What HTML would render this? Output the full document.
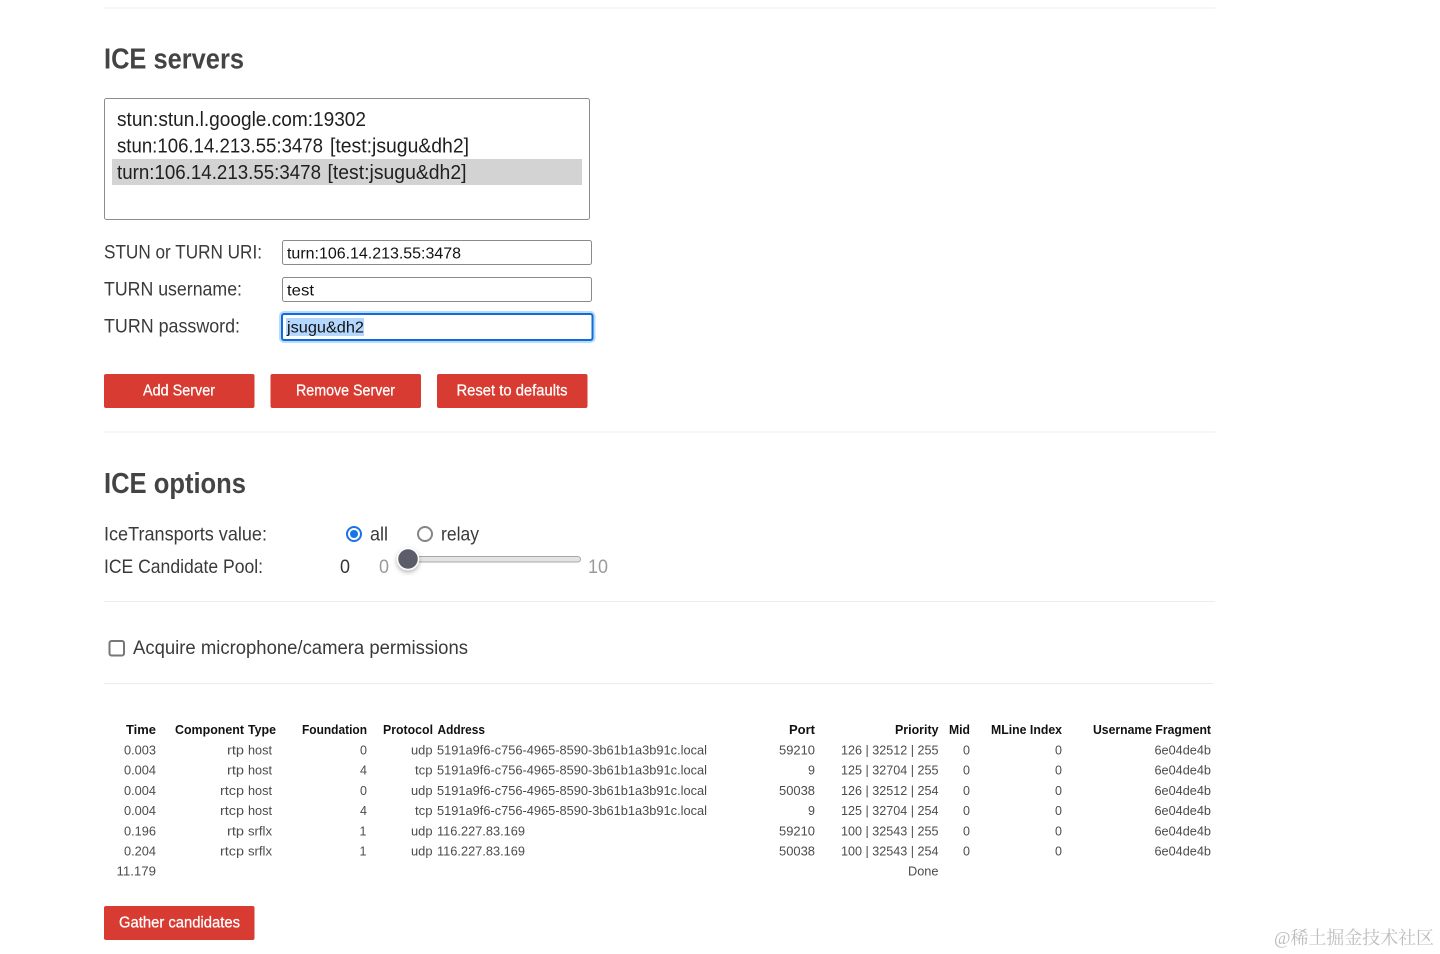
<!DOCTYPE html>
<html lang="zh">
<head>
<meta charset="utf-8">
<title>ICE servers</title>
<style>
html,body{margin:0;padding:0;background:#fff;width:1440px;height:954px;overflow:hidden}
svg{display:block;position:absolute;left:0;top:0}
text{font-family:"Liberation Sans",Arial,sans-serif}
.h{font-size:28.5px;font-weight:700;fill:#444}
.l{font-size:20px;fill:#1f1f1f}
.f{font-size:19.5px;fill:#3a3a3a}
.i{font-size:16px;fill:#111}
.b{font-size:15.5px;fill:#fff;stroke:#fff;stroke-width:.25px}
.th{font-size:12.5px;font-weight:700;fill:#111}
.td{font-size:12.5px;fill:#4c4c4c}
.r{text-anchor:end}
</style>
</head>
<body>
<svg width="1440" height="954" viewBox="0 0 1440 954" xmlns="http://www.w3.org/2000/svg">
<defs>
<filter id="sh" x="-60%" y="-60%" width="220%" height="220%"><feDropShadow dx="0" dy="2" stdDeviation="2.500" flood-color="#000" flood-opacity=".3"/></filter>
</defs>
<rect width="1440" height="954" fill="#fff"/>

<g fill="#ececec">
<rect x="104" y="7.5" width="1111" height="1"/>
<rect x="104" y="431.5" width="1111" height="1"/>
<rect x="104" y="601" width="1111" height="1"/>
<rect x="104" y="683" width="1109" height="1"/>
</g>

<text class="h" x="104" y="68.500" textLength="140" lengthAdjust="spacingAndGlyphs">ICE servers</text>

<rect x="104.5" y="98.5" width="485" height="121" rx="2" fill="#fff" stroke="#8c8c8c"/>
<rect x="112" y="159" width="470" height="26" fill="#d3d3d3"/>
<text class="l" x="117" y="126" textLength="249" lengthAdjust="spacingAndGlyphs">stun:stun.l.google.com:19302</text>
<text class="l" x="117" y="152.500" textLength="206" lengthAdjust="spacingAndGlyphs">stun:106.14.213.55:3478</text>
<text class="l" x="330" y="152.500" textLength="139" lengthAdjust="spacingAndGlyphs">[test:jsugu&amp;dh2]</text>
<text class="l" x="117" y="179" textLength="204" lengthAdjust="spacingAndGlyphs">turn:106.14.213.55:3478</text>
<text class="l" x="327.500" y="179" textLength="139" lengthAdjust="spacingAndGlyphs">[test:jsugu&amp;dh2]</text>

<text class="f" x="104" y="258.500" textLength="158" lengthAdjust="spacingAndGlyphs">STUN or TURN URI:</text>
<text class="f" x="104" y="295.500" textLength="138" lengthAdjust="spacingAndGlyphs">TURN username:</text>
<text class="f" x="104" y="332.500" textLength="136" lengthAdjust="spacingAndGlyphs">TURN password:</text>

<rect x="282.500" y="240.500" width="309" height="24" rx="2" fill="#fff" stroke="#8a8a8a"/>
<text class="i" x="287" y="258.500" textLength="174" lengthAdjust="spacingAndGlyphs">turn:106.14.213.55:3478</text>
<rect x="282.500" y="277.500" width="309" height="24" rx="2" fill="#fff" stroke="#8a8a8a"/>
<text class="i" x="287" y="295.500" textLength="27" lengthAdjust="spacingAndGlyphs">test</text>
<rect x="279" y="311" width="316.500" height="32" rx="5" fill="#b8dcfc"/>
<rect x="282" y="314" width="310.500" height="26" rx="2" fill="#fff" stroke="#0f6cd8" stroke-width="2"/>
<rect x="286" y="318" width="78" height="18" fill="#b3d7fe"/>
<text class="i" x="287" y="332.500" textLength="77" lengthAdjust="spacingAndGlyphs">jsugu&amp;dh2</text>

<g fill="#d83b31">
<rect x="104" y="374" width="150.500" height="34" rx="2"/>
<rect x="270.500" y="374" width="150.500" height="34" rx="2"/>
<rect x="437" y="374" width="150.500" height="34" rx="2"/>
<rect x="104" y="906" width="150.500" height="34" rx="2"/>
</g>
<text class="b" x="143" y="395.500" textLength="72" lengthAdjust="spacingAndGlyphs">Add Server</text>
<text class="b" x="296" y="395.500" textLength="99" lengthAdjust="spacingAndGlyphs">Remove Server</text>
<text class="b" x="456.500" y="395.500" textLength="111" lengthAdjust="spacingAndGlyphs">Reset to defaults</text>
<text class="b" x="119" y="927.500" textLength="121" lengthAdjust="spacingAndGlyphs">Gather candidates</text>

<text class="h" x="104" y="493" textLength="142" lengthAdjust="spacingAndGlyphs">ICE options</text>

<text class="f" x="104" y="540.500" textLength="163" lengthAdjust="spacingAndGlyphs">IceTransports value:</text>
<circle cx="354" cy="534" r="7" fill="#fff" stroke="#1a73e8" stroke-width="2"/>
<circle cx="354" cy="534" r="4" fill="#1a73e8"/>
<text class="f" x="370" y="540.500" textLength="18" lengthAdjust="spacingAndGlyphs">all</text>
<circle cx="425" cy="534" r="7" fill="#fff" stroke="#858585" stroke-width="2"/>
<text class="f" x="441" y="540.500" textLength="38" lengthAdjust="spacingAndGlyphs">relay</text>

<text class="f" x="104" y="573" textLength="159" lengthAdjust="spacingAndGlyphs">ICE Candidate Pool:</text>
<text class="f" x="340" y="573" textLength="10" lengthAdjust="spacingAndGlyphs" style="fill:#333">0</text>
<text class="f" x="379" y="573" textLength="10" lengthAdjust="spacingAndGlyphs" style="fill:#9a9a9a">0</text>
<rect x="405.500" y="556.500" width="175" height="5.500" rx="2.750" fill="#e4e4e4" stroke="#a8a8a8"/>
<circle cx="408" cy="559" r="10.500" fill="#5b5c6b" stroke="#fff" stroke-width="1.500" filter="url(#sh)"/>
<text class="f" x="588" y="573" textLength="20" lengthAdjust="spacingAndGlyphs" style="fill:#9a9a9a">10</text>

<rect x="109.500" y="641" width="14.500" height="14.500" rx="2" fill="#fff" stroke="#777" stroke-width="2"/>
<text class="f" x="133" y="654" textLength="335" lengthAdjust="spacingAndGlyphs">Acquire microphone/camera permissions</text>

<!-- header -->
<text class="th" x="126" y="734" textLength="30" lengthAdjust="spacingAndGlyphs">Time</text>
<text class="th" x="175" y="734" textLength="69" lengthAdjust="spacingAndGlyphs">Component</text>
<text class="th" x="248" y="734" textLength="28" lengthAdjust="spacingAndGlyphs">Type</text>
<text class="th" x="302" y="734" textLength="65" lengthAdjust="spacingAndGlyphs">Foundation</text>
<text class="th" x="383" y="734" textLength="50" lengthAdjust="spacingAndGlyphs">Protocol</text>
<text class="th" x="437.500" y="734" textLength="47.500" lengthAdjust="spacingAndGlyphs">Address</text>
<text class="th" x="789" y="734" textLength="26" lengthAdjust="spacingAndGlyphs">Port</text>
<text class="th" x="895" y="734" textLength="43.500" lengthAdjust="spacingAndGlyphs">Priority</text>
<text class="th" x="949" y="734" textLength="21" lengthAdjust="spacingAndGlyphs">Mid</text>
<text class="th" x="991" y="734" textLength="71" lengthAdjust="spacingAndGlyphs">MLine Index</text>
<text class="th" x="1093" y="734" textLength="118" lengthAdjust="spacingAndGlyphs">Username Fragment</text>

<!-- row 1 -->
<g transform="translate(0,754.5)">
<text class="td" x="124" textLength="32" lengthAdjust="spacingAndGlyphs">0.003</text>
<text class="td" x="227" textLength="17" lengthAdjust="spacingAndGlyphs">rtp</text>
<text class="td" x="248" textLength="24" lengthAdjust="spacingAndGlyphs">host</text>
<text class="td r" x="367">0</text>
<text class="td" x="411" textLength="21.500" lengthAdjust="spacingAndGlyphs">udp</text>
<text class="td" x="437" textLength="270" lengthAdjust="spacingAndGlyphs">5191a9f6-c756-4965-8590-3b61b1a3b91c.local</text>
<text class="td" x="779" textLength="36" lengthAdjust="spacingAndGlyphs">59210</text>
<text class="td" x="841" textLength="97.500" lengthAdjust="spacingAndGlyphs">126 | 32512 | 255</text>
<text class="td r" x="970">0</text>
<text class="td r" x="1062">0</text>
<text class="td" x="1154.500" textLength="56.500" lengthAdjust="spacingAndGlyphs">6e04de4b</text>
</g>
<!-- row 2 -->
<g transform="translate(0,774.5)">
<text class="td" x="124" textLength="32" lengthAdjust="spacingAndGlyphs">0.004</text>
<text class="td" x="227" textLength="17" lengthAdjust="spacingAndGlyphs">rtp</text>
<text class="td" x="248" textLength="24" lengthAdjust="spacingAndGlyphs">host</text>
<text class="td r" x="367">4</text>
<text class="td" x="415" textLength="17.500" lengthAdjust="spacingAndGlyphs">tcp</text>
<text class="td" x="437" textLength="270" lengthAdjust="spacingAndGlyphs">5191a9f6-c756-4965-8590-3b61b1a3b91c.local</text>
<text class="td r" x="815">9</text>
<text class="td" x="841" textLength="97.500" lengthAdjust="spacingAndGlyphs">125 | 32704 | 255</text>
<text class="td r" x="970">0</text>
<text class="td r" x="1062">0</text>
<text class="td" x="1154.500" textLength="56.500" lengthAdjust="spacingAndGlyphs">6e04de4b</text>
</g>
<!-- row 3 -->
<g transform="translate(0,794.8)">
<text class="td" x="124" textLength="32" lengthAdjust="spacingAndGlyphs">0.004</text>
<text class="td" x="220" textLength="24" lengthAdjust="spacingAndGlyphs">rtcp</text>
<text class="td" x="248" textLength="24" lengthAdjust="spacingAndGlyphs">host</text>
<text class="td r" x="367">0</text>
<text class="td" x="411" textLength="21.500" lengthAdjust="spacingAndGlyphs">udp</text>
<text class="td" x="437" textLength="270" lengthAdjust="spacingAndGlyphs">5191a9f6-c756-4965-8590-3b61b1a3b91c.local</text>
<text class="td" x="779" textLength="36" lengthAdjust="spacingAndGlyphs">50038</text>
<text class="td" x="841" textLength="97.500" lengthAdjust="spacingAndGlyphs">126 | 32512 | 254</text>
<text class="td r" x="970">0</text>
<text class="td r" x="1062">0</text>
<text class="td" x="1154.500" textLength="56.500" lengthAdjust="spacingAndGlyphs">6e04de4b</text>
</g>
<!-- row 4 -->
<g transform="translate(0,815.2)">
<text class="td" x="124" textLength="32" lengthAdjust="spacingAndGlyphs">0.004</text>
<text class="td" x="220" textLength="24" lengthAdjust="spacingAndGlyphs">rtcp</text>
<text class="td" x="248" textLength="24" lengthAdjust="spacingAndGlyphs">host</text>
<text class="td r" x="367">4</text>
<text class="td" x="415" textLength="17.500" lengthAdjust="spacingAndGlyphs">tcp</text>
<text class="td" x="437" textLength="270" lengthAdjust="spacingAndGlyphs">5191a9f6-c756-4965-8590-3b61b1a3b91c.local</text>
<text class="td r" x="815">9</text>
<text class="td" x="841" textLength="97.500" lengthAdjust="spacingAndGlyphs">125 | 32704 | 254</text>
<text class="td r" x="970">0</text>
<text class="td r" x="1062">0</text>
<text class="td" x="1154.500" textLength="56.500" lengthAdjust="spacingAndGlyphs">6e04de4b</text>
</g>
<!-- row 5 -->
<g transform="translate(0,835.4)">
<text class="td" x="124" textLength="32" lengthAdjust="spacingAndGlyphs">0.196</text>
<text class="td" x="227" textLength="17" lengthAdjust="spacingAndGlyphs">rtp</text>
<text class="td" x="248" textLength="24" lengthAdjust="spacingAndGlyphs">srflx</text>
<text class="td r" x="366.500">1</text>
<text class="td" x="411" textLength="21.500" lengthAdjust="spacingAndGlyphs">udp</text>
<text class="td" x="437" textLength="88" lengthAdjust="spacingAndGlyphs">116.227.83.169</text>
<text class="td" x="779" textLength="36" lengthAdjust="spacingAndGlyphs">59210</text>
<text class="td" x="841" textLength="97.500" lengthAdjust="spacingAndGlyphs">100 | 32543 | 255</text>
<text class="td r" x="970">0</text>
<text class="td r" x="1062">0</text>
<text class="td" x="1154.500" textLength="56.500" lengthAdjust="spacingAndGlyphs">6e04de4b</text>
</g>
<!-- row 6 -->
<g transform="translate(0,855.5)">
<text class="td" x="124" textLength="32" lengthAdjust="spacingAndGlyphs">0.204</text>
<text class="td" x="220" textLength="24" lengthAdjust="spacingAndGlyphs">rtcp</text>
<text class="td" x="248" textLength="24" lengthAdjust="spacingAndGlyphs">srflx</text>
<text class="td r" x="366.500">1</text>
<text class="td" x="411" textLength="21.500" lengthAdjust="spacingAndGlyphs">udp</text>
<text class="td" x="437" textLength="88" lengthAdjust="spacingAndGlyphs">116.227.83.169</text>
<text class="td" x="779" textLength="36" lengthAdjust="spacingAndGlyphs">50038</text>
<text class="td" x="841" textLength="97.500" lengthAdjust="spacingAndGlyphs">100 | 32543 | 254</text>
<text class="td r" x="970">0</text>
<text class="td r" x="1062">0</text>
<text class="td" x="1154.500" textLength="56.500" lengthAdjust="spacingAndGlyphs">6e04de4b</text>
</g>
<!-- row 7 -->
<g transform="translate(0,875.5)">
<text class="td" x="116.500" textLength="39.500" lengthAdjust="spacingAndGlyphs">11.179</text>
<text class="td" x="908" textLength="30.500" lengthAdjust="spacingAndGlyphs">Done</text>
</g>

<text x="1274" y="944" textLength="160" lengthAdjust="spacingAndGlyphs" style="font-family:'Liberation Serif','Noto Serif CJK SC',serif;font-size:18px;fill:#bdbdbd">@稀土掘金技术社区</text>
</svg>
</body>
</html>
